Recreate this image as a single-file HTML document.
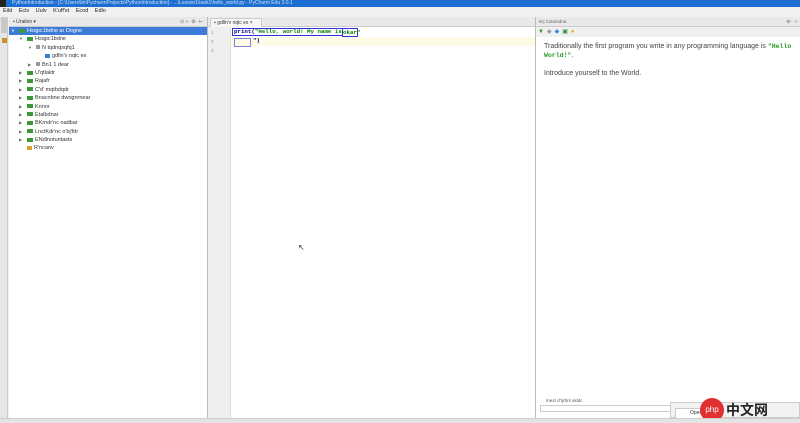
<!DOCTYPE html><html><head><style>
*{margin:0;padding:0;box-sizing:border-box}
body{width:800px;height:423px;overflow:hidden;background:#f0f0f0;font-family:"Liberation Sans",sans-serif;font-size:6px;color:#333;position:relative}
.a{position:absolute}
.tree div{height:8.4px;line-height:8.4px;white-space:nowrap;font-size:5.5px}
.g{display:inline-block;width:6px;height:4px;background:#3a9a3a;margin-right:2px;vertical-align:middle}
.ar{display:inline-block;width:8px;color:#666;font-size:4px}
</style></head><body>
<div class="a" style="left:0;top:0;width:800px;height:7px;background:#1c6fd0;color:#cfe0f5;font-size:5px;line-height:6px;padding-left:12px">PythonIntroduction - [C:\Users\lin\PycharmProjects\PythonIntroduction] - ...\Lesson1\task1\hello_world.py - PyCharm Edu 3.0.1</div>
<div class="a" style="left:0;top:0;width:6px;height:7px;background:#222"></div>
<div class="a" style="left:3px;top:8px;font-size:5.5px;color:#222;word-spacing:5px">Eild Ecls Uulv K'uff'st Ecod Edlo</div>
<div class="a" style="left:0;top:17px;width:8px;height:401px;background:#e6e6e6;border-right:1px solid #ccc"></div>
<div class="a" style="left:1px;top:17px;width:6px;height:16px;background:#c8c8c8"></div>
<div class="a" style="left:2px;top:38px;width:5px;height:5px;background:#c89030"></div>
<div class="a" style="left:9px;top:17px;width:198px;height:10px;background:#e9e9e9;border-bottom:1px solid #ccc;font-size:5px;line-height:10px;padding-left:4px">▪ Uraitvo ▾<span style="float:right;padding-right:4px;color:#666">⊙ ÷ &nbsp;⚙· ⊢</span></div>
<div class="a" style="left:9px;top:27px;width:198px;height:391px;background:#fff"></div>
<div class="a tree" style="left:9px;top:27px;width:198px">
<div style="background:#3d7bd8;color:#fff;padding-left:2px"><span class="ar" style="color:#fff">▼</span><span class="g" style="background:#3a9a3a"></span>Hsqpc1bdne ar Dogne</div>
<div style="padding-left:10px"><span class="ar">▼</span><span class="g"></span>Hsqpc1bdne</div>
<div style="padding-left:19px"><span class="ar">▼</span><span class="g" style="background:#999;width:4px"></span>N tqdnqsqfq1</div>
<div style="padding-left:36px"><span class="g" style="background:#3b7bd0;width:5px"></span>gdlln'v nqlc ex</div>
<div style="padding-left:19px"><span class="ar">▶</span><span class="g" style="background:#999;width:4px"></span>Bn1 1 dear</div>
<div style="padding-left:10px"><span class="ar">▶</span><span class="g"></span>U'qtlaldr</div>
<div style="padding-left:10px"><span class="ar">▶</span><span class="g"></span>Rajafr</div>
<div style="padding-left:10px"><span class="ar">▶</span><span class="g"></span>C'd' mqtbdqdr</div>
<div style="padding-left:10px"><span class="ar">▶</span><span class="g"></span>Bnacnbne dwognrnear</div>
<div style="padding-left:10px"><span class="ar">▶</span><span class="g"></span>Knnor</div>
<div style="padding-left:10px"><span class="ar">▶</span><span class="g"></span>Etalbdnar</div>
<div style="padding-left:10px"><span class="ar">▶</span><span class="g"></span>BKrndr'nc nadbar</div>
<div style="padding-left:10px"><span class="ar">▶</span><span class="g"></span>LnctKdr'nc o'bj'fdr</div>
<div style="padding-left:10px"><span class="ar">▶</span><span class="g"></span>ENdlnotuntasts</div>
<div style="padding-left:18px"><span class="g" style="background:#d9a030;width:5px"></span>R'ncanv</div>
</div>
<div class="a" style="left:207px;top:17px;width:1px;height:401px;background:#bbb"></div>
<div class="a" style="left:208px;top:17px;width:327px;height:10px;background:#e9e9e9;border-bottom:1px solid #ccc"></div>
<div class="a" style="left:210px;top:18px;width:52px;height:9px;background:#f7f7f7;border:1px solid #ccc;border-bottom:none;font-size:5px;line-height:8px;padding-left:3px">▪ gdlln'v nqlc ex ×</div>
<div class="a" style="left:208px;top:27px;width:23px;height:391px;background:#efefef;border-right:1px solid #e0e0e0;font-size:4.5px;color:#999;line-height:9px;padding:1px 0 0 3px">1<br>2<br>3</div>
<div class="a" style="left:231px;top:27px;width:304px;height:391px;background:#fff"></div>
<div class="a" style="left:231px;top:37px;width:304px;height:9px;background:#fdfbe6"></div>
<div class="a" style="left:234px;top:28px;font-family:'Liberation Mono',monospace;font-size:5.8px;font-weight:bold;color:#000080;line-height:8px">print(<span style="color:#008000">"Hello, world! My name is </span></div>
<div class="a" style="left:232px;top:28px;width:110px;height:8px;border:1px solid #3333dd;border-right:none"></div>
<div class="a" style="left:342px;top:28px;width:16px;height:9px;border:1px solid #3333dd;font-family:'Liberation Mono',monospace;font-size:5.8px;font-weight:bold;color:#008000;line-height:7px">okar"</div>
<div class="a" style="left:234px;top:38px;width:17px;height:9px;border:1px solid #8080e0"></div>
<div class="a" style="left:253px;top:37px;font-family:'Liberation Mono',monospace;font-size:5.8px;font-weight:bold;color:#000080">")</div>
<div class="a" style="left:535px;top:17px;width:1px;height:401px;background:#bbb"></div>
<div class="a" style="left:536px;top:17px;width:264px;height:10px;background:#e9e9e9;border-bottom:1px solid #ccc;font-size:4.5px;line-height:10px;padding-left:3px;color:#666">Erj Cdndsdna<span style="float:right;padding-right:3px">⚙· ⊣</span></div>
<div class="a" style="left:538px;top:28px;font-size:6px;letter-spacing:3px"><span style="color:#3a8a3a">▼</span><span style="color:#999">◆</span><span style="color:#3a8ad8">◆</span><span style="color:#3a8a3a">▣</span><span style="color:#e0b020">●</span></div>
<div class="a" style="left:536px;top:37px;width:264px;height:381px;background:#fff"></div>
<div class="a" style="left:544px;top:42px;width:250px;font-size:7px;line-height:9px;color:#444">Traditionally the first program you write in any programming language is <b style="font-family:'Liberation Mono',monospace;color:#2a9a2a;font-size:6.5px">"Hello World!"</b>.<br><br>Introduce yourself to the World.</div>
<div class="a" style="left:546px;top:398px;font-size:4.5px;color:#555">/ne4/ d'rjrbnl okldc</div>
<div class="a" style="left:540px;top:405px;width:255px;height:7px;border:1px solid #ccc;background:#fff"></div>
<div class="a" style="left:670px;top:402px;width:130px;height:16px;background:#f2f2f2;border:1px solid #ccc"></div>
<div class="a" style="left:675px;top:408px;width:48px;height:11px;background:#fff;border:1px solid #ccc;font-size:5px;line-height:9px;padding-left:14px">Open</div>
<div class="a" style="left:700px;top:398px;width:24px;height:24px;border-radius:50%;background:#e03030;color:#fff;font-size:8px;line-height:24px;text-align:center">php</div>
<div class="a" style="left:726px;top:400px;font-size:14px;font-weight:bold;color:#222;font-family:'Liberation Sans','Noto Sans CJK SC',sans-serif">中文网</div>
<div class="a" style="left:0;top:418px;width:800px;height:5px;background:#e4e4e4;border-top:1px solid #ccc"></div>
<div class="a" style="left:298px;top:243px;font-size:8px;color:#333">↖</div>
</body></html>
